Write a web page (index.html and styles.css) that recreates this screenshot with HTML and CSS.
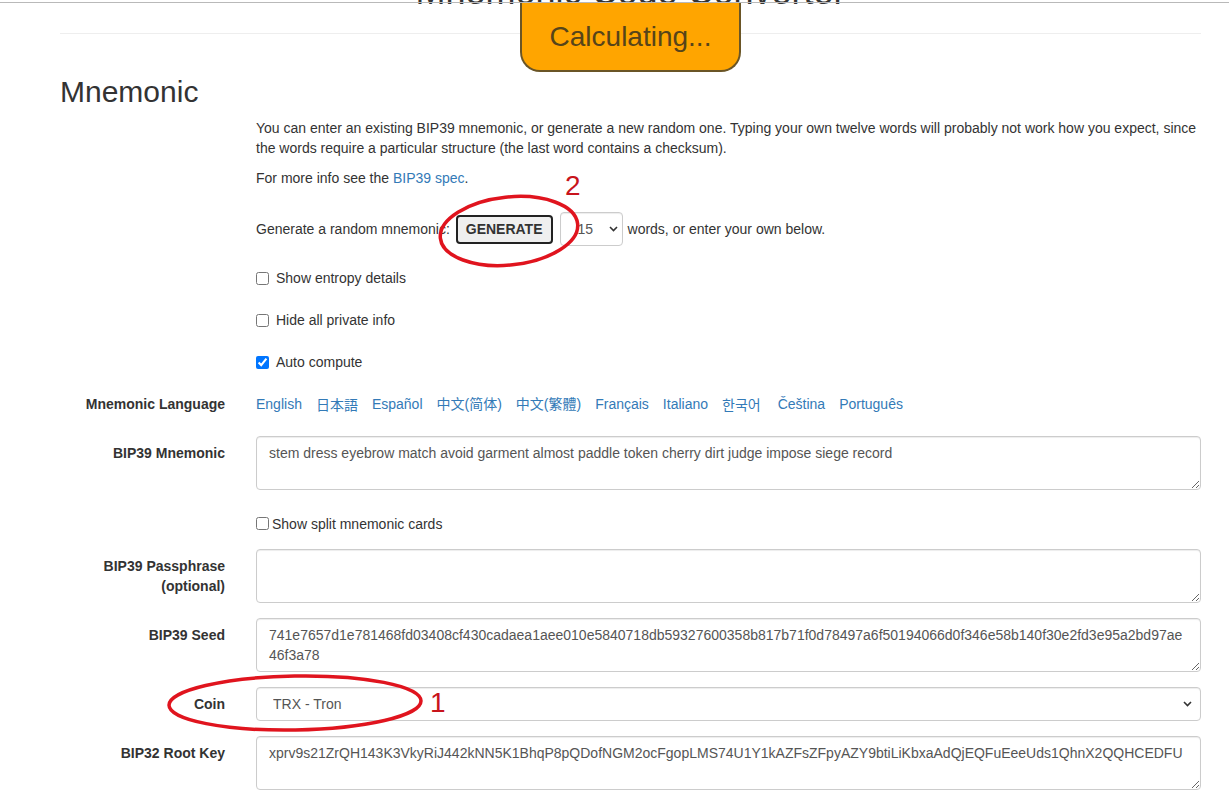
FILE: index.html
```html
<!DOCTYPE html>
<html>
<head>
<meta charset="utf-8">
<title>Mnemonic Code Converter</title>
<link rel="stylesheet" href="styles.css">
</head>
<body>
<div class="topline"></div>
<div class="container">
	<div class="feedback-bar"><div class="feedback">Calculating...</div></div>
	<h1 class="title">Mnemonic Code Converter</h1>
	<hr>
	<h2>Mnemonic</h2>
	<form class="form">
		<div class="group">
			<div class="lbl"></div>
			<div class="field">
				<p>You can enter an existing BIP39 mnemonic, or generate a new random one. Typing your own twelve words will probably not work how you expect, since the words require a particular structure (the last word contains a checksum).</p>
				<p>For more info see the <a href="#">BIP39 spec</a>.</p>
			</div>
		</div>
		<div class="group">
			<div class="lbl"></div>
			<div class="field gen-row">
				<span>Generate a random mnemonic:</span>
				<button type="button" class="btn-generate">GENERATE</button>
				<span class="select-wrap words">
					<select class="control strength"><option>15</option></select>
					<svg class="chev" width="9" height="6" viewBox="0 0 9 6"><path d="M1 1 L4.5 4.5 L8 1" fill="none" stroke="#333" stroke-width="1.6"/></svg>
				</span>
				<span class="after">words, or enter your own below.</span>
			</div>
		</div>
		<div class="group">
			<div class="lbl"></div>
			<label class="field check"><input type="checkbox"> Show entropy details</label>
		</div>
		<div class="group">
			<div class="lbl"></div>
			<label class="field check"><input type="checkbox"> Hide all private info</label>
		</div>
		<div class="group">
			<div class="lbl"></div>
			<label class="field check"><input type="checkbox" checked> Auto compute</label>
		</div>
		<div class="group">
			<div class="lbl">Mnemonic Language</div>
			<div class="field languages">
				<a href="#">English</a>
				<a href="#" class="jp">日本語</a>
				<a href="#">Español</a>
				<a href="#" class="sc">中文(简体)</a>
				<a href="#" class="tc">中文(繁體)</a>
				<a href="#">Français</a>
				<a href="#">Italiano</a>
				<a href="#" class="kr">한국어</a>
				<a href="#">Čeština</a>
				<a href="#">Português</a>
			</div>
		</div>
		<div class="group">
			<div class="lbl">BIP39 Mnemonic</div>
			<div class="field"><textarea class="control" rows="2">stem dress eyebrow match avoid garment almost paddle token cherry dirt judge impose siege record</textarea></div>
		</div>
		<div class="group">
			<div class="lbl"></div>
			<label class="field check split"><input type="checkbox"> Show split mnemonic cards</label>
		</div>
		<div class="group">
			<div class="lbl">BIP39 Passphrase (optional)</div>
			<div class="field"><textarea class="control" rows="2"></textarea></div>
		</div>
		<div class="group">
			<div class="lbl">BIP39 Seed</div>
			<div class="field"><textarea class="control seed" rows="2">741e7657d1e781468fd03408cf430cadaea1aee010e5840718db59327600358b817b71f0d78497a6f50194066d0f346e58b140f30e2fd3e95a2bd97ae46f3a78</textarea></div>
		</div>
		<div class="group">
			<div class="lbl">Coin</div>
			<div class="field select-wrap coin">
				<select class="control network"><option>TRX - Tron</option></select>
				<svg class="chev" width="9" height="6" viewBox="0 0 9 6"><path d="M1 1 L4.5 4.5 L8 1" fill="none" stroke="#333" stroke-width="1.6"/></svg>
			</div>
		</div>
		<div class="group">
			<div class="lbl">BIP32 Root Key</div>
			<div class="field"><textarea class="control" rows="2">xprv9s21ZrQH143K3VkyRiJ442kNN5K1BhqP8pQDofNGM2ocFgopLMS74U1Y1kAZFsZFpyAZY9btiLiKbxaAdQjEQFuEeeUds1QhnX2QQHCEDFU</textarea></div>
		</div>
	</form>
</div>
<svg class="marks" width="1229" height="790" viewBox="0 0 1229 790">
	<ellipse cx="509" cy="231" rx="69" ry="34" transform="rotate(-6 509 231)" fill="none" stroke="#e0141e" stroke-width="3.5"/>
	<ellipse cx="295" cy="703" rx="126" ry="27" transform="rotate(-1 295 703)" fill="none" stroke="#e0141e" stroke-width="3.5"/>
	<text x="565" y="195" class="mark-num">2</text>
	<text x="430" y="712" class="mark-num">1</text>
</svg>
</body>
</html>
```

FILE: styles.css
```css
html, body {
margin:0; padding:0;
overflow:hidden;
background:#fff; }

body {
font-family:"Liberation Sans", Arial, sans-serif;
font-size:14px; line-height:20px;
color:#333; }

.topline {
position:fixed; top:2px; left:0; right:0;
height:1px; background:#b9b9b9;
z-index:10; }

.container {
position:relative;
display:flow-root;
width:1141px;
margin-left:60px; }

.feedback-bar {
position:absolute; top:2px; left:0; right:0;
display:flex; justify-content:center;
z-index:4; }
.feedback {
background:#ffa500;
color:#56441a;
font-size:28px; line-height:40px;
padding:15px 28px 13px;
border:2px solid #6a5526; border-top:0;
border-radius:0 0 20px 20px; }

.title {
font-size:36px; line-height:40px; font-weight:500;
text-align:center;
margin:-28px 0 0; }

hr {
border:0; border-top:1px solid #eee;
margin:21px 0 0; }

h2 {
font-size:30px; line-height:33px; font-weight:500;
margin:41px 0 10px; }

.form { margin:0; }

.group {
display:grid;
grid-template-columns:165px 945px;
column-gap:31px;
margin-bottom:15px; }
.group:first-child { margin-bottom:14px; }

.lbl {
text-align:right;
font-weight:bold;
padding-top:7px; }

.field p { margin:0 0 10px; }

a { color:#337ab7; text-decoration:none; }

.gen-row {
display:flex; align-items:center;
height:34px; }
.btn-generate {
height:29px; margin-left:6px;
padding:0 8px;
font:bold 14px "Liberation Sans", Arial, sans-serif;
color:#333; background:#efefef;
border:2px solid #222; border-radius:4px; }
.after { margin-left:5px; }

.select-wrap { position:relative; display:block; }
.select-wrap.words { margin-left:7px; width:63px; }
.chev {
position:absolute; top:50%; margin-top:-3px;
pointer-events:none; }
.words .chev { right:5px; }
.coin .chev { right:9px; }

.control {
display:block;
width:100%; box-sizing:border-box;
border:1px solid #ccc; border-radius:4px;
padding:6px 12px;
font:14px/20px "Liberation Sans", Arial, sans-serif;
color:#555; background:#fff;
box-shadow:inset 0 1px 1px rgba(0,0,0,.075); }
textarea.control { height:54px; resize:vertical; }
select.control {
-webkit-appearance:none; appearance:none;
height:34px; }
.strength { padding-left:17px; }
.network { padding-left:16px; }
.seed { padding-right:14px; }

.check {
display:flex; align-items:center; gap:7px;
padding-top:7px; height:20px; }
.check input { margin:0; width:13px; height:13px; }
.check.split { gap:3px; padding-top:8px; height:21px; }

.languages {
display:flex; gap:14px;
padding:7px 0; }
.jp { font-family:"Noto Sans CJK JP", sans-serif; }
.sc { font-family:"Liberation Sans", "Noto Sans CJK SC", sans-serif; }
.tc { font-family:"Liberation Sans", "Noto Sans CJK TC", sans-serif; }
.kr { font-family:"Noto Sans CJK KR", sans-serif; padding-right:3px; }

.marks {
position:absolute; top:0; left:0;
pointer-events:none;
z-index:6; }
.mark-num {
font-family:"Liberation Sans", Arial, sans-serif;
font-size:28px;
fill:#c8141c; }
```
